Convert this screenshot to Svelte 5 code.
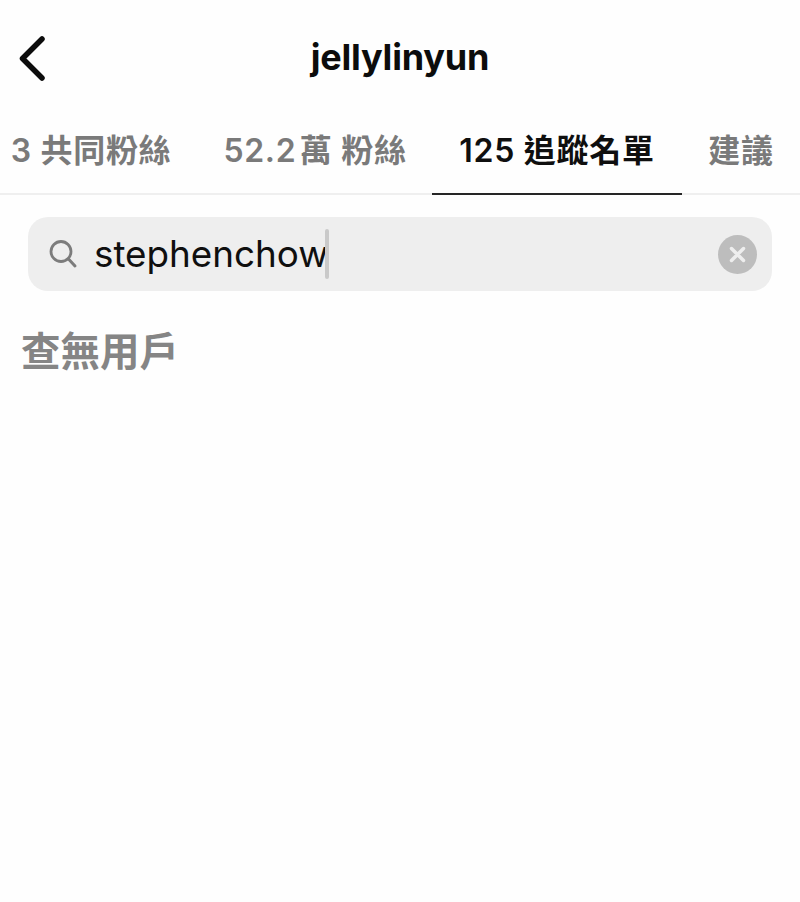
<script>
    const tabs = [
        { label: "3 共同粉絲", width: 182 },
        { label: "52.2\u200a萬 粉絲", width: 250 },
        { label: "125 追蹤名單", width: 250, active: true },
        { label: "建議", width: 118 },
    ];
</script>

<style>
    :global(body) {
        background: #fff;
    }
    .page {
        width: 800px;
        height: 902px;
        background: #fefefe;
        font-family: Inter, "Noto Sans CJK TC", sans-serif;
        overflow: hidden;
    }
    .header {
        height: 116px;
        padding-top: 15px;
        box-sizing: border-box;
        position: relative;
        display: flex;
        justify-content: center;
    }
    .back {
        position: absolute;
        left: 16px;
        top: 33px;
    }
    .title {
        font-size: 36px;
        font-weight: 700;
        letter-spacing: -0.2px;
        line-height: 84px;
        color: #0c0c0c;
    }
    .tabs {
        display: flex;
        height: 79px;
        box-sizing: border-box;
        border-bottom: 2px solid #efefef;
    }
    .tab {
        box-sizing: border-box;
        height: 79px;
        padding-top: 12px;
        font-size: 32px;
        font-weight: 600;
        letter-spacing: 0.7px;
        line-height: 46px;
        color: #7a7a7a;
        text-align: center;
        white-space: nowrap;
    }
    .tab:nth-child(2) {
        padding-left: 16px;
    }
    .tab.active {
        color: #0f0f0f;
        border-bottom: 2px solid #262626;
    }
    .search {
        margin: 22px 28px 0;
        height: 74px;
        border-radius: 20px;
        background: #eeeeee;
        display: flex;
        align-items: center;
        padding: 0 15px 0 20px;
    }
    .query {
        margin-left: 16px;
        font-size: 36.8px;
        color: #0f0f0f;
        line-height: 50px;
    }
    .caret {
        width: 4px;
        height: 50px;
        margin-left: -3px;
        border-radius: 2px;
        background: #c9c9c9;
    }
    .clear {
        margin-left: auto;
    }
    .empty {
        margin: 36px 0 0 21px;
        font-size: 39.5px;
        font-weight: 600;
        line-height: 50px;
        color: #858585;
    }
</style>

<div class="page">
    <div class="header">
        <svg class="back" width="32" height="50" viewBox="0 0 32 50" fill="none">
            <path d="M26 6 L6.5 25.500 L26 45" stroke="#0c0c0c" stroke-width="5.500" stroke-linecap="round" stroke-linejoin="round" />
        </svg>
        <div class="title">jellylinyun</div>
    </div>
    <div class="tabs">
        {#each tabs as tab}
            <div class="tab" class:active={tab.active} style="width: {tab.width}px">{tab.label}</div>
        {/each}
    </div>
    <div class="search">
        <svg width="30" height="30" viewBox="0 0 30 30" fill="none">
            <circle cx="13" cy="12.500" r="10" stroke="#7c7c7c" stroke-width="2.800" />
            <path d="M20.500 20 L27 27" stroke="#7c7c7c" stroke-width="3" stroke-linecap="round" />
        </svg>
        <span class="query">stephenchow</span>
        <span class="caret"></span>
        <svg class="clear" width="39" height="39" viewBox="0 0 39 39" fill="none">
            <circle cx="19.5" cy="19.5" r="19.5" fill="#bdbdbd" />
            <path d="M13.500 13.500 L25.500 25.500 M25.500 13.500 L13.500 25.500" stroke="#eeeeee" stroke-width="3.500" stroke-linecap="round" />
        </svg>
    </div>
    <div class="empty">查無用戶</div>
</div>
